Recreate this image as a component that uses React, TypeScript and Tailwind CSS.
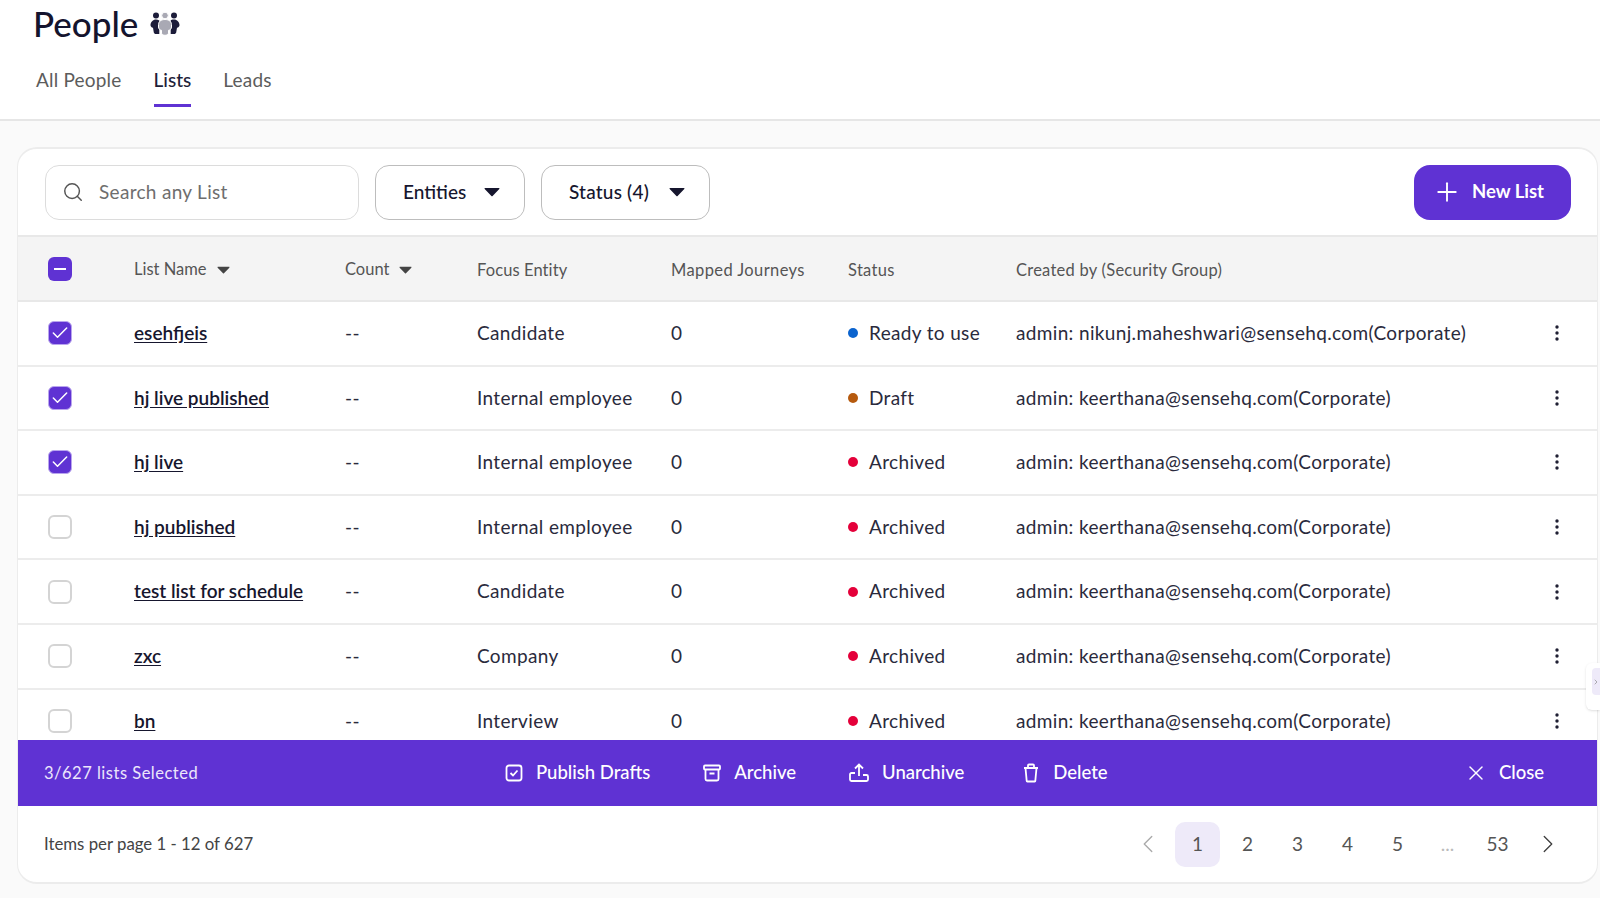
import { Search, Plus, X, ChevronLeft, ChevronRight, Check } from "lucide-react";

const rows = [
  { name: "esehfjeis", entity: "Candidate", status: "Ready to use", dot: "bg-[#0b63ce]", by: "admin: nikunj.maheshwari@sensehq.com(Corporate)", checked: true },
  { name: "hj live published", entity: "Internal employee", status: "Draft", dot: "bg-[#b65a0e]", by: "admin: keerthana@sensehq.com(Corporate)", checked: true },
  { name: "hj live", entity: "Internal employee", status: "Archived", dot: "bg-[#e4003a]", by: "admin: keerthana@sensehq.com(Corporate)", checked: true },
  { name: "hj published", entity: "Internal employee", status: "Archived", dot: "bg-[#e4003a]", by: "admin: keerthana@sensehq.com(Corporate)", checked: false },
  { name: "test list for schedule", entity: "Candidate", status: "Archived", dot: "bg-[#e4003a]", by: "admin: keerthana@sensehq.com(Corporate)", checked: false },
  { name: "zxc", entity: "Company", status: "Archived", dot: "bg-[#e4003a]", by: "admin: keerthana@sensehq.com(Corporate)", checked: false },
  { name: "bn", entity: "Interview", status: "Archived", dot: "bg-[#e4003a]", by: "admin: keerthana@sensehq.com(Corporate)", checked: false },
];

function Caret({ className }: { className: string }) {
  return (
    <svg viewBox="0 0 16 10" className={className} fill="currentColor">
      <path d="M1.2 1h13.600c.6 0 .9.7.5 1.100L8.600 9c-.3.4-.9.4-1.200 0L.7 2.100C.3 1.700.6 1 1.200 1z" />
    </svg>
  );
}

function Kebab() {
  return (
    <svg viewBox="0 0 4 16" className="h-[16px] w-[4px] text-[#1f1f33]" fill="currentColor">
      <circle cx="2" cy="2" r="1.700" />
      <circle cx="2" cy="8" r="1.700" />
      <circle cx="2" cy="14" r="1.700" />
    </svg>
  );
}

function PeopleIcon() {
  return (
    <svg viewBox="0 0 30 24" className="h-[24px] w-[30px]">
      <g fill="#1c1c3a">
        <circle cx="6" cy="3.500" r="3" />
        <circle cx="24" cy="3.500" r="3" />
        <path d="M6 7.500c-3 0-5.500 2.500-5.500 5.500 0 1.500 1 2.500 2.500 2.800l.8 4.700c.2.900 1 1.500 2 1.500h3.500V8.500C8.200 7.800 7.200 7.500 6 7.500z" />
        <path d="M24 7.500c3 0 5.500 2.500 5.500 5.500 0 1.500-1 2.500-2.500 2.800l-.8 4.700c-.2.900-1 1.500-2 1.500h-3.500V8.500c.6-.7 1.600-1 2.800-1z" />
      </g>
      <g fill="#a9a9b4" stroke="#ffffff" strokeWidth="1">
        <circle cx="15" cy="3.500" r="3.300" />
        <path d="M8.500 12.500c0-3 2.800-5 6.500-5s6.500 2 6.500 5v2.500c0 1.800-1.300 3-3 3.300V21c0 1.200-1.600 2.300-3.500 2.300s-3.500-1.100-3.500-2.300v-2.700c-1.700-.3-3-1.500-3-3.300z" />
      </g>
    </svg>
  );
}

function Box({ checked }: { checked: boolean }) {
  if (checked) {
    return (
      <span className="flex h-[24px] w-[24px] items-center justify-center rounded-[6px] border border-[#b9a5ee] bg-[#5f32d3]">
        <Check className="h-[20px] w-[20px] text-white" strokeWidth={1.8} />
      </span>
    );
  }
  return <span className="block h-[24px] w-[24px] rounded-[6px] border-2 border-[#d4d4d4] bg-white" />;
}

export default function App() {
  return (
    <div className="relative h-[898px] w-[1600px] overflow-hidden bg-[#fafafa] font-['Lato','Noto_Sans',sans-serif] text-[#1f1f33]">
      <header className="h-[121px] border-b-2 border-[#e6e6e6] bg-white pl-[33px]">
        <div className="flex h-[47px] items-center gap-[12px]">
          <h1 className="text-[35px] font-medium leading-[47px] text-[#14142e]">People</h1>
          <PeopleIcon />
        </div>
        <nav className="mt-[19px] flex gap-[32px] pl-[3px] text-[19px] tracking-[0.2px] text-[#5c5c5c]">
          <span>All People</span>
          <span className="h-[41px] border-b-[3px] border-[#5f32d3] font-medium tracking-normal text-[#1f1f3a]">Lists</span>
          <span>Leads</span>
        </nav>
      </header>

      <main className="ml-[17px] mt-[26px] h-[737px] w-[1581px] overflow-hidden rounded-[20px] border-x border-y-2 border-[#ececec] bg-white">
        <div className="flex h-[86px] items-center gap-[16px] pl-[27px] pr-[26px]">
          <div className="flex h-[55px] w-[314px] items-center gap-[15px] rounded-[14px] border border-[#dcdcdc] pl-[16px] text-[19px] tracking-[0.3px] text-[#6e6e6e]">
            <Search className="h-[22px] w-[22px] text-[#555]" strokeWidth={1.6} />
            <span>Search any List</span>
          </div>
          <div className="flex h-[55px] w-[150px] items-center justify-between rounded-[14px] border border-[#bdbdbd] pl-[27px] pr-[24px] text-[19px] font-medium text-[#16162e]">
            <span>Entities</span>
            <Caret className="h-[10px] w-[16px]" />
          </div>
          <div className="flex h-[55px] w-[169px] items-center justify-between rounded-[14px] border border-[#bdbdbd] pl-[27px] pr-[24px] text-[19px] font-medium tracking-[0.2px] text-[#16162e]">
            <span>Status (4)</span>
            <Caret className="h-[10px] w-[16px]" />
          </div>
          <button className="ml-auto flex h-[55px] w-[157px] items-center gap-[10px] rounded-[16px] bg-[#5f32d3] pl-[18px] text-[18.500px] font-bold text-white">
            <Plus className="h-[30px] w-[30px]" strokeWidth={1.500} />
            <span>New List</span>
          </button>
        </div>

        <div className="flex h-[67px] items-center border-y-2 border-[#e8e8e8] bg-[#f4f4f4] text-[16.500px] text-[#555]">
          <div className="w-[116px] pl-[30px]">
            <span className="flex h-[24px] w-[24px] items-center justify-center rounded-[6px] bg-[#5f32d3]">
              <span className="h-[2px] w-[12px] bg-white" />
            </span>
          </div>
          <div className="flex w-[211px] items-center gap-[10px] pt-[2px]">List Name <Caret className="h-[8px] w-[13px] text-[#444]" /></div>
          <div className="flex w-[132px] items-center gap-[10px] pt-[2px]">Count <Caret className="h-[8px] w-[13px] text-[#444]" /></div>
          <div className="w-[194px] pt-[4px] tracking-[0.100px]">Focus Entity</div>
          <div className="w-[177px] pt-[4px] tracking-[0.400px]">Mapped Journeys</div>
          <div className="w-[168px] pt-[4px] tracking-[0.300px]">Status</div>
          <div className="pt-[4px] tracking-[0.250px]">Created by (Security Group)</div>
        </div>

        <div className="h-[438px] overflow-hidden">
          {rows.map((r) => (
            <div key={r.name} className="flex h-[64.600px] items-center border-b-2 border-[#ececec] text-[19px] tracking-[0.350px] text-[#2a2a3c]">
              <div className="w-[116px] pl-[30px]"><Box checked={r.checked} /></div>
              <div className="w-[211px] font-semibold tracking-normal text-[#16162e] underline underline-offset-2">{r.name}</div>
              <div className="w-[132px]">--</div>
              <div className="w-[194px]">{r.entity}</div>
              <div className="w-[177px]">0</div>
              <div className="flex w-[168px] items-center gap-[11px]">
                <span className={`h-[10px] w-[10px] rounded-full ${r.dot}`} />
                {r.status}
              </div>
              <div className="w-[539px]">{r.by}</div>
              <Kebab />
            </div>
          ))}
        </div>

        <div className="flex h-[66px] items-center bg-[#5f32d3] pl-[26px] text-white">
          <span className="w-[461px] text-[16.500px] tracking-[0.500px] text-[#ece6fb]">3/627 lists Selected</span>
          <div className="flex items-center gap-[53px] text-[18.500px] font-medium">
            <span className="flex items-center gap-[13px]">
              <svg viewBox="0 0 18 18" className="h-[18px] w-[18px]" fill="none" stroke="currentColor" strokeWidth="1.800">
                <rect x="1.500" y="1.500" width="15" height="15" rx="2.500" />
                <path d="M5.500 9l2.500 2.500 4.500-5" />
              </svg>
              Publish Drafts
            </span>
            <span className="flex items-center gap-[13px]">
              <svg viewBox="0 0 18 18" className="h-[18px] w-[18px]" fill="none" stroke="currentColor" strokeWidth="1.800">
                <rect x="1" y="1.500" width="16" height="4" rx="1" />
                <path d="M2.500 5.500V15c0 .8.7 1.500 1.500 1.500h10c.8 0 1.500-.7 1.500-1.500V5.500M6.500 9.500h5" />
              </svg>
              Archive
            </span>
            <span className="flex items-center gap-[13px]">
              <svg viewBox="0 0 20 20" className="h-[20px] w-[20px]" fill="none" stroke="currentColor" strokeWidth="1.800">
                <path d="M10 13V2M6 5.500L10 1.500l4 4M6 10H2.500c-.8 0-1.500.7-1.500 1.500v5c0 .8.7 1.500 1.500 1.500h15c.8 0 1.500-.7 1.500-1.500v-3c0-.8-.7-1.500-1.500-1.500H14" />
              </svg>
              Unarchive
            </span>
            <span className="ml-[5px] flex items-center gap-[13px]">
              <svg viewBox="0 0 18 20" className="h-[20px] w-[18px]" fill="none" stroke="currentColor" strokeWidth="1.800">
                <path d="M2 5h14M6 5V2.500C6 2 6.400 1.500 7 1.500h4c.6 0 1 .5 1 1V5M3.500 5l1.200 13c0 .3.3.5.6.500h7.400c.3 0 .6-.2.6-.500L14.500 5" />
              </svg>
              Delete
            </span>
          </div>
          <span className="ml-auto flex items-center gap-[11px] pr-[53px] text-[18.500px] font-medium">
            <X className="h-[24px] w-[24px]" strokeWidth={1.400} />
            Close
          </span>
        </div>

        <div className="flex h-[76px] items-center justify-between pl-[26px] pr-[27px]">
          <span className="text-[16.800px] text-[#444]">Items per page 1 - 12 of 627</span>
          <div className="flex items-center gap-[5px] text-[19px] text-[#555]">
            <span className="flex h-[45px] w-[45px] items-center justify-center text-[#aaa]"><ChevronLeft className="h-[30px] w-[30px]" strokeWidth={1.100} /></span>
            <span className="flex h-[45px] w-[45px] items-center justify-center rounded-[10px] bg-[#eeeaf9]">1</span>
            <span className="flex h-[45px] w-[45px] items-center justify-center">2</span>
            <span className="flex h-[45px] w-[45px] items-center justify-center">3</span>
            <span className="flex h-[45px] w-[45px] items-center justify-center">4</span>
            <span className="flex h-[45px] w-[45px] items-center justify-center">5</span>
            <span className="flex h-[45px] w-[45px] items-center justify-center text-[#bbb]">...</span>
            <span className="flex h-[45px] w-[45px] items-center justify-center">53</span>
            <span className="flex h-[45px] w-[45px] items-center justify-center text-[#444]"><ChevronRight className="h-[30px] w-[30px]" strokeWidth={1.100} /></span>
          </div>
        </div>
      </main>

      <div className="absolute left-[1586px] top-[663px] h-[47px] w-[14px] rounded-l-[6px] bg-white pl-[6px] pt-[5px] shadow-sm">
        <div className="flex h-[27px] w-[8px] items-center justify-start rounded-l-[4px] bg-[#eeeaf9]">
          <ChevronRight className="h-[8px] w-[8px] text-[#888]" strokeWidth={2} />
        </div>
      </div>
    </div>
  );
}
